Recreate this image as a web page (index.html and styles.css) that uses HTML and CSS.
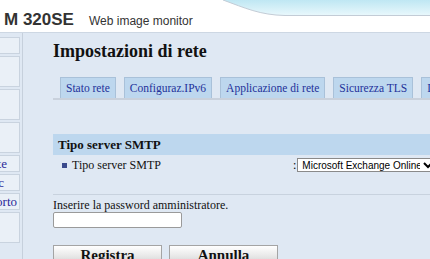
FILE: index.html
```html
<!DOCTYPE html>
<html lang="it">
<head>
    <meta charset="UTF-8">
    <title>Web image monitor</title>
    <link rel="stylesheet" href="styles.css">
</head>
<body>

<div class="header">
    <span class="model">M 320SE</span>
    <span class="product">Web image monitor</span>
    <svg class="wave" width="215" height="18" viewBox="0 0 215 18">
        <defs>
            <linearGradient id="waveFill" x1="0" y1="0" x2="0" y2="1">
                <stop offset="0" stop-color="#bfe7f3"/>
                <stop offset="1" stop-color="#e9f8fc"/>
            </linearGradient>
        </defs>
        <path d="M8 0 C 30 8, 45 15, 70 15.5 L 215 15.5 L 215 0 Z" fill="url(#waveFill)"/>
        <path d="M8 0 C 30 8, 45 15, 70 15.5 L 215 15.5" fill="none" stroke="#c3ccd6" stroke-width="1"/>
    </svg>
</div>

<div class="page">
    <div class="sidebar">
        <div class="menu-item"></div>
        <div class="menu-item tall"></div>
        <div class="menu-item tall"></div>
        <div class="menu-item tall"></div>
        <div class="menu-item link"><span class="pad-a">Impostazioni rete</span></div>
        <div class="menu-item link"><span class="pad-b">Webpage per Mac</span></div>
        <div class="menu-item link"><span class="pad-c">Rapporto</span></div>
        <div class="menu-item tall"></div>
    </div>

    <div class="content">
        <h1>Impostazioni di rete</h1>

        <div class="tabs">
            <div class="tab">Stato rete</div>
            <div class="tab">Configuraz.IPv6</div>
            <div class="tab">Applicazione di rete</div>
            <div class="tab">Sicurezza TLS</div>
            <div class="tab">DNS</div>
        </div>

        <div class="section-title">Tipo server SMTP</div>
        <div class="row">
            <div class="label"><span class="bullet"></span>Tipo server SMTP</div>
            <div class="value">
                <span class="colon">:</span>
                <select class="combo">
                    <option>Microsoft Exchange Online</option>
                </select>
            </div>
        </div>

        <div class="password">
            <div>Inserire la password amministratore.</div>
            <input type="password" class="field">
        </div>

        <div class="buttons">
            <button type="button" class="btn">Registra</button>
            <button type="button" class="btn">Annulla</button>
        </div>
    </div>
</div>

</body>
</html>
```

FILE: styles.css
```css
body {
    margin: 0;
    background-color: #dfe8f3;
    font-family: "Liberation Serif", "Times New Roman", serif;
    overflow: hidden;
}
.header {
    display: flex;
    align-items: flex-start;
    height: 32px;
    background-color: #fff;
    border-bottom: 1px solid #cdd7e3;
    font-family: "Liberation Sans", Arial, sans-serif;
}
.model {
    margin: 10px 0 0 4px;
    font-size: 17px;
    font-weight: bold;
    color: #333;
}
.product {
    margin: 14px 0 0 15px;
    font-size: 12px;
    color: #333;
}
.wave {
    margin-left: auto;
    display: block;
}
.page {
    display: flex;
    align-items: flex-start;
}
.sidebar {
    width: 20px;
    padding: 4px 2px 0 0;
    border-right: 1px solid #c6d0dc;
    min-height: 230px;
}
.menu-item {
    height: 15px;
    margin-bottom: 2px;
    background-color: #eaf0f7;
    border: 1px solid #c9d3df;
    border-left: none;
    display: flex;
    justify-content: flex-end;
    align-items: center;
    overflow: hidden;
    white-space: nowrap;
    font-size: 13px;
    color: #2a2a9a;
}
.menu-item.tall {
    height: 29px;
}
.pad-a {
    padding-right: 12px;
}
.pad-b {
    padding-right: 15px;
}
.pad-c {
    padding-right: 2px;
}
.content {
    flex: 1;
    padding-left: 30px;
}
h1 {
    margin: 7px 0 0;
    font-size: 18px;
    line-height: 22px;
    font-weight: bold;
    color: #111;
}
.tabs {
    display: flex;
    gap: 8px;
    margin-top: 15px;
    padding-left: 7px;
    border-bottom: 2px solid #c9d1dc;
    white-space: nowrap;
}
.tab {
    height: 20px;
    line-height: 20px;
    padding: 0 5px;
    background-color: #bdd7ee;
    border: 1px solid #a9c1d9;
    border-bottom: none;
    font-size: 11.5px;
    color: #23319a;
}
.section-title {
    margin-top: 34px;
    height: 21px;
    line-height: 21px;
    padding-left: 5px;
    background-color: #bdd7ee;
    font-size: 13px;
    font-weight: bold;
    color: #111;
}
.row {
    display: flex;
    align-items: center;
    height: 20px;
    padding-bottom: 19px;
    border-bottom: 1px solid #c8d2de;
    white-space: nowrap;
}
.label {
    display: flex;
    align-items: center;
    width: 231px;
    padding-left: 9px;
    font-size: 12px;
    color: #111;
}
.bullet {
    width: 5px;
    height: 5px;
    margin-right: 5px;
    background-color: #3a4a8c;
}
.value {
    display: flex;
    align-items: center;
}
.colon {
    font-size: 12px;
    margin-right: 1px;
}
.combo {
    width: 140px;
    height: 14px;
    padding: 0;
    font-family: "Liberation Sans", Arial, sans-serif;
    font-size: 10px;
    border: 1px solid #8a8a8a;
    background-color: #fff;
}
.password {
    margin-top: 3px;
    font-size: 12px;
    line-height: 14px;
    color: #111;
}
.field {
    display: block;
    width: 123px;
    height: 14px;
    padding: 0 2px;
    margin: 0;
    border: 1px solid #9a9a9a;
    border-radius: 2px;
}
.buttons {
    display: flex;
    gap: 7px;
    margin-top: 17px;
}
.btn {
    width: 109px;
    height: 20px;
    padding: 0;
    font-family: "Liberation Serif", "Times New Roman", serif;
    font-size: 15px;
    font-weight: bold;
    line-height: 18px;
    color: #111;
    border: 1px solid #a4a4a4;
    background: linear-gradient(#ffffff, #e6e6e6 60%, #cfcfcf);
}
```
